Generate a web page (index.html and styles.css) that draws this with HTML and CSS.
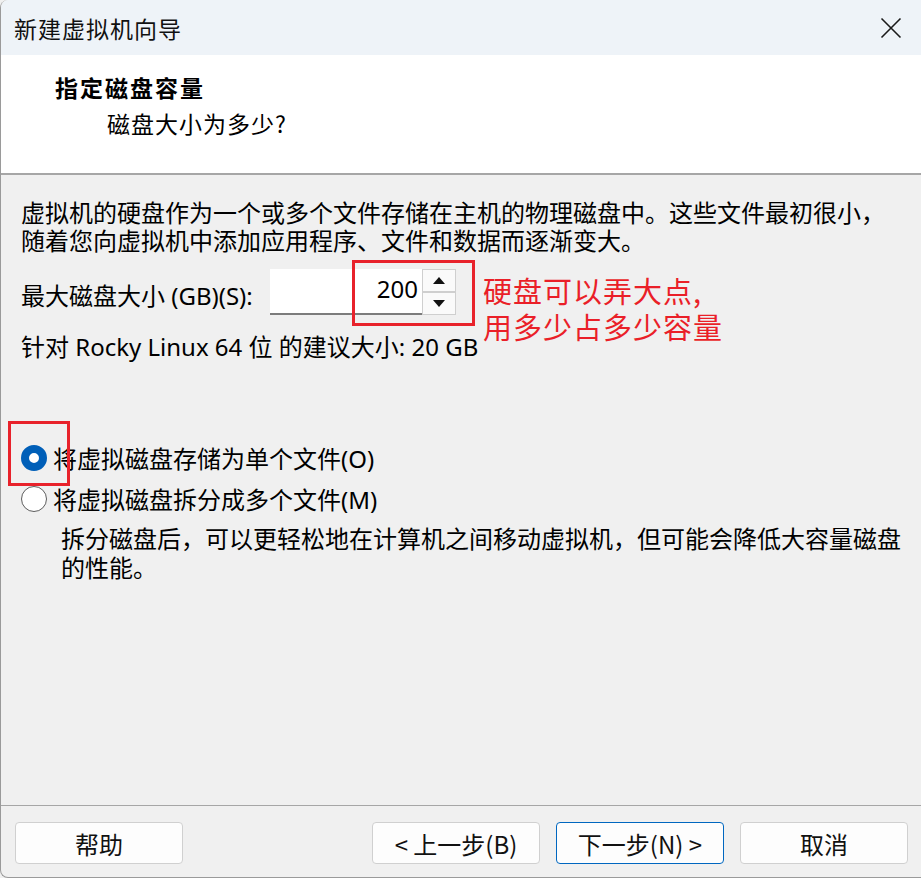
FILE: index.html
```html
<!DOCTYPE html>
<html lang="zh-CN">
<head>
<meta charset="utf-8">
<title>新建虚拟机向导</title>
<link rel="stylesheet" href="styles.css">
</head>
<body>
<div class="window">
  <div class="titlebar">
    <span class="title">新建虚拟机向导</span>
    <span class="close">
      <svg width="22" height="22" viewBox="0 0 22 22"><path d="M1.5 1.5 L20.5 20.5 M20.5 1.5 L1.5 20.5" stroke="#1a1a1a" stroke-width="1.6" fill="none"/></svg>
    </span>
  </div>
  <div class="header">
    <div class="h-title">指定磁盘容量</div>
    <div class="h-sub">磁盘大小为多少?</div>
  </div>
  <div class="body">
    <p class="intro">虚拟机的硬盘作为一个或多个文件存储在主机的物理磁盘中。这些文件最初很小，<br>随着您向虚拟机中添加应用程序、文件和数据而逐渐变大。</p>
    <div class="size-row">
      <span class="size-label">最大磁盘大小 (GB)(S):</span>
      <div class="spin">
        <div class="spin-input">200</div>
        <div class="spin-btns">
          <div class="spin-btn"><span class="tri-up"></span></div>
          <div class="spin-btn"><span class="tri-down"></span></div>
        </div>
      </div>
    </div>
    <p class="rec">针对 Rocky Linux 64 位 的建议大小: 20 GB</p>
    <div class="radios">
      <div class="radio-row"><span class="radio checked"></span><span>将虚拟磁盘存储为单个文件(O)</span></div>
      <div class="radio-row"><span class="radio"></span><span>将虚拟磁盘拆分成多个文件(M)</span></div>
    </div>
    <p class="desc">拆分磁盘后，可以更轻松地在计算机之间移动虚拟机，但可能会降低大容量磁盘<br>的性能。</p>

    <div class="mark mark-size"></div>
    <div class="note">硬盘可以弄大点,<br>用多少占多少容量</div>
    <div class="mark mark-radio"></div>
  </div>
  <div class="footer">
    <button class="btn">帮助</button>
    <div class="spacer"></div>
    <button class="btn">&lt; 上一步(B)</button>
    <button class="btn primary">下一步(N) &gt;</button>
    <button class="btn">取消</button>
  </div>
</div>
</body>
</html>
```

FILE: styles.css
```css
* { box-sizing: border-box; }
html, body { margin: 0; padding: 0; }
body {
  width: 921px;
  height: 878px;
  overflow: hidden;
  background: #f0f0f0;
  font-family: "Noto Sans", "Noto Sans CJK SC", sans-serif;
  color: #000;
}
.window {
  width: 921px;
  height: 878px;
  display: flex;
  flex-direction: column;
  border-left: 1px solid #9a9a9a;
  border-bottom: 1px solid #9a9a9a;
  border-radius: 8px 0 0 8px;
  overflow: hidden;
  background: #f0f0f0;
}
.titlebar {
  height: 55px;
  flex: none;
  background: #eef3f8;
  display: flex;
  align-items: center;
  justify-content: space-between;
  padding: 0 19px 0 13px;
}
.title {
  font-family: "Noto Sans CJK SC", sans-serif;
  font-size: 23px;
  letter-spacing: 1px;
  color: #111;
}
.close { display: flex; width: 22px; height: 22px; }

.header {
  height: 120px;
  flex: none;
  background: #fff;
  border-bottom: 2px solid #a6a6a6;
  padding: 14px 0 0 54px;
}
.h-title {
  font-family: "Noto Sans CJK SC", sans-serif;
  font-weight: bold;
  font-size: 23px;
  line-height: 36px;
  letter-spacing: 2px;
}
.h-sub {
  font-family: "Noto Sans CJK SC", sans-serif;
  font-size: 23px;
  line-height: 36px;
  padding-left: 52px;
  letter-spacing: 1px;
}

.body {
  flex: 1;
  position: relative;
  padding: 24px 0 0 20px;
  font-size: 24px;
}
.intro {
  margin: 0;
  line-height: 28px;
  white-space: nowrap;
  font-size: 24px;
}
.size-row {
  display: flex;
  align-items: center;
  margin-top: 14px;
  height: 46px;
}
.size-label {
  width: 249px;
  font-size: 24px;
  padding-top: 4px;
  white-space: nowrap;
}
.spin {
  display: flex;
  height: 46px;
}
.spin-input {
  width: 152px;
  height: 46px;
  background: #fff;
  border-bottom: 2px solid #7c7c7c;
  text-align: right;
  padding-right: 4px;
  font-size: 24px;
  line-height: 40px;
}
.spin-btns {
  width: 34px;
  display: flex;
  flex-direction: column;
}
.spin-btn {
  flex: 1;
  border: 1px solid #cfcfcf;
  background: #fafafa;
  display: flex;
  align-items: center;
  justify-content: center;
}
.tri-up {
  width: 0; height: 0;
  border-left: 6px solid transparent;
  border-right: 6px solid transparent;
  border-bottom: 7px solid #111;
}
.tri-down {
  width: 0; height: 0;
  border-left: 6px solid transparent;
  border-right: 6px solid transparent;
  border-top: 7px solid #111;
}
.rec {
  margin: 18px 0 0;
  line-height: 28px;
  font-size: 24px;
}
.radios {
  margin-top: 76px;
}
.radio-row {
  display: flex;
  align-items: center;
  gap: 6px;
  height: 41px;
  font-size: 24px;
}
.radio {
  width: 26px;
  height: 26px;
  border-radius: 50%;
  border: 1.5px solid #5d5d5d;
  background: #fff;
  flex: none;
}
.radio.checked {
  border: 8.5px solid #005fb8;
  background: #fff;
}
.desc {
  margin: 5px 0 0 40px;
  line-height: 29px;
  font-size: 24px;
  white-space: nowrap;
}

.mark {
  position: absolute;
  border: 3px solid #e8222b;
}
.mark-size { left: 351px; top: 85px; width: 123px; height: 66px; }
.mark-radio { left: 7px; top: 246px; width: 62px; height: 65px; }
.note {
  position: absolute;
  left: 482px;
  top: 97px;
  color: #ea1f28;
  font-family: "Noto Sans CJK SC", sans-serif;
  font-size: 29px;
  line-height: 36px;
  letter-spacing: 1px;
  white-space: nowrap;
}

.footer {
  flex: none;
  height: 72px;
  border-top: 1px solid #a6a6a6;
  display: flex;
  align-items: flex-start;
  gap: 16px;
  padding: 16px 13px 0 14px;
}
.spacer { flex: 1; }
.btn {
  width: 168px;
  height: 42px;
  background: #fdfdfd;
  border: 1px solid #d0d0d0;
  border-radius: 4px;
  font-family: "Noto Sans CJK SC", sans-serif;
  font-size: 24px;
  color: #111;
  padding: 0;
}
.btn.primary {
  border: 1.5px solid #0067c0;
}
```
